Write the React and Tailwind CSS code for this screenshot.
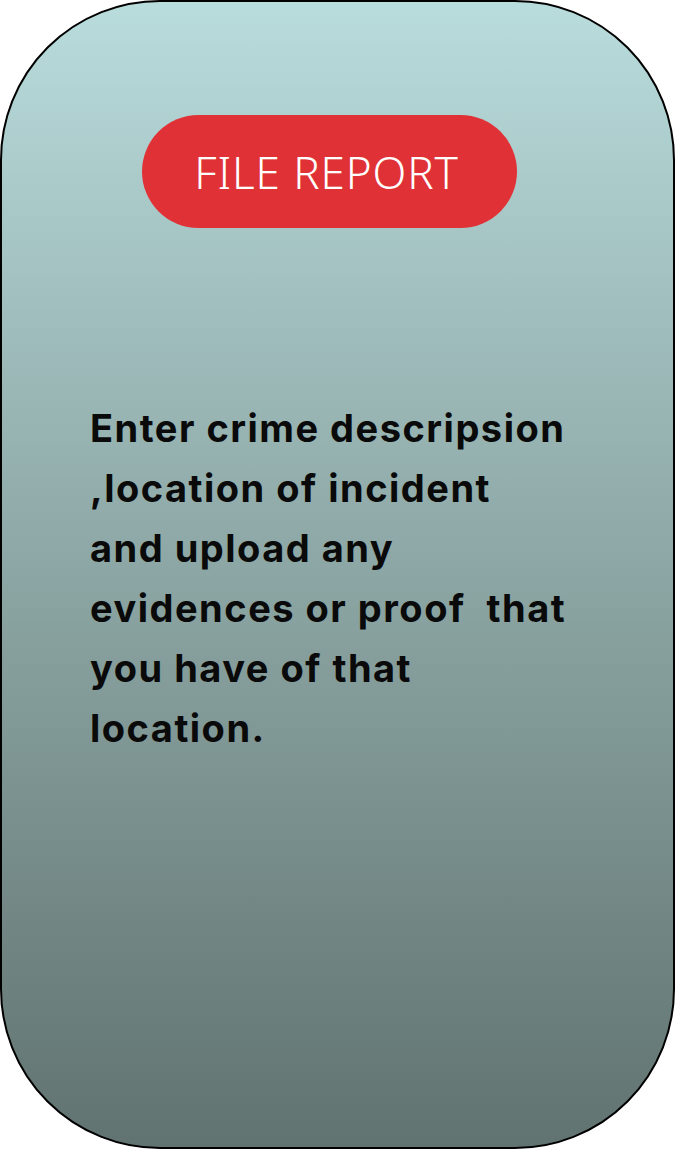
export default function App() {
    const lines = [
        'Enter crime descripsion',
        ',location of incident',
        'and upload any',
        'evidences or proof  that',
        'you have of that',
        'location.',
    ];

    return (
        <div className="w-[676px] h-[1150px] bg-white">
            <div className="h-[1149px] w-[675px] rounded-[160px] border-2 border-black bg-gradient-to-b from-[#b9dcdc] to-[#617370] flex flex-col">
                {/* Action button */}
                <div className="pt-[113px] pl-[140px]">
                    <button className="w-[375px] h-[113px] rounded-full bg-[#e03236] text-white text-[44px] font-light tracking-[0.9px] flex items-center justify-center pr-[6px]"
                        style={{ fontFamily: '"Noto Sans", sans-serif' }}>
                        FILE REPORT
                    </button>
                </div>

                {/* Instructions */}
                <div className="mt-[170px] pl-[88px] text-[#0a0a0a] font-bold text-[38px] leading-[60px] tracking-[1.5px] whitespace-pre"
                    style={{ fontFamily: 'Inter, sans-serif' }}>
                    {lines.map((line) => (
                        <div key={line}>{line}</div>
                    ))}
                </div>
            </div>
        </div>
    );
}
